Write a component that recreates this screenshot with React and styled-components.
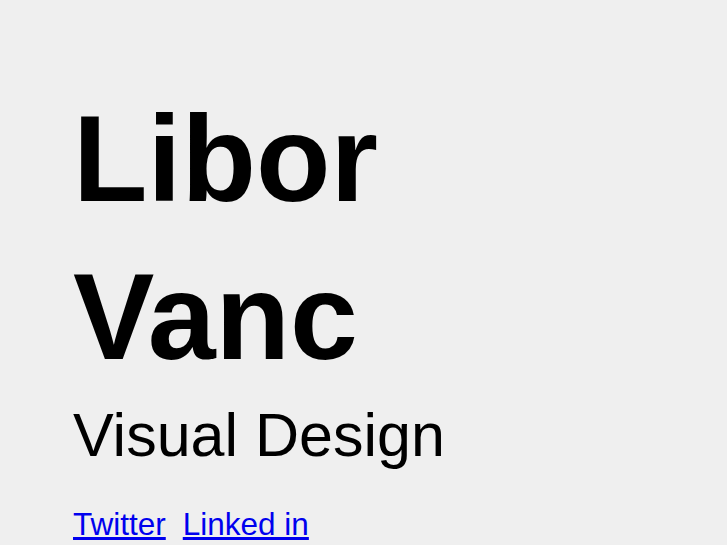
import React from "react";
import styled, { createGlobalStyle } from "styled-components";

const Global = createGlobalStyle`
  html, body {
    margin: 0;
    padding: 0;
    background: #efefef;
  }
  body {
    font-family: "Liberation Sans", Arial, Helvetica, sans-serif;
    color: #000;
  }
`;

const Page = styled.main`
  padding: 80px 0 0 73px;
`;

const Name = styled.h1`
  margin: 0;
  font-size: 122px;
  line-height: 158px;
  font-weight: 700;
`;

const Role = styled.h2`
  margin: 3px 0 0;
  font-size: 61px;
  line-height: 73px;
  font-weight: 400;
`;

const Links = styled.nav`
  display: flex;
  gap: 17px;
  margin-top: 34px;
`;

const Link = styled.a`
  font-size: 31.5px;
  line-height: 36px;
  color: #0000ee;
  text-decoration: underline;
`;

export default function App() {
  return (
    <>
      <Global />
      <Page>
        <Name>
          Libor
          <br />
          Vanc
        </Name>
        <Role>Visual Design</Role>
        <Links>
          <Link href="#">Twitter</Link>
          <Link href="#">Linked in</Link>
        </Links>
      </Page>
    </>
  );
}
